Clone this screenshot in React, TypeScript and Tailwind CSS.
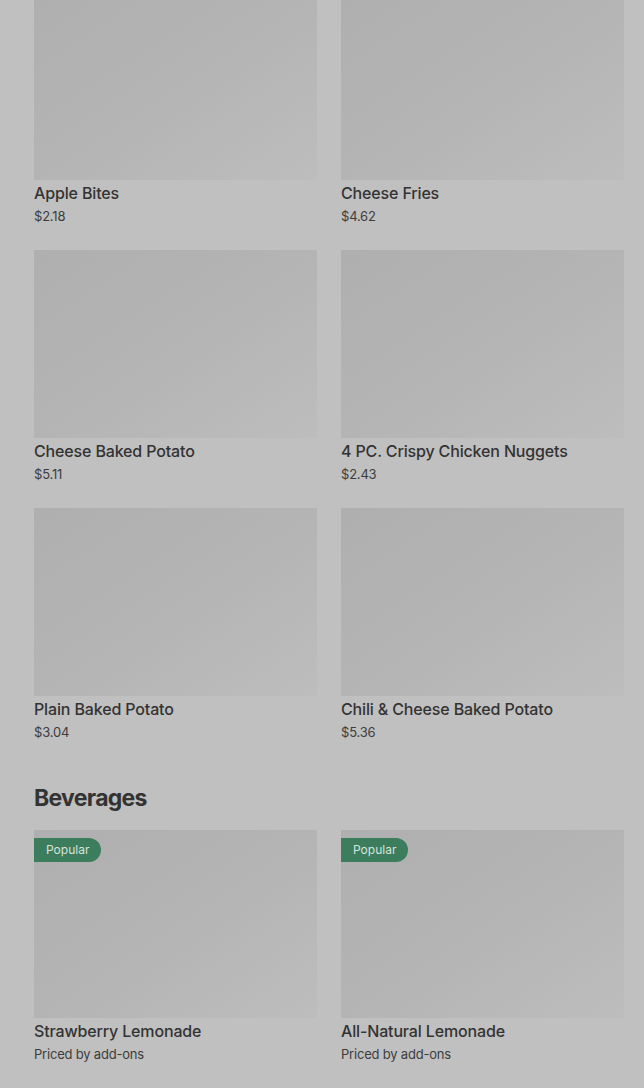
const food = [
  { name: "Apple Bites", price: "$2.18" },
  { name: "Cheese Fries", price: "$4.62" },
  { name: "Cheese Baked Potato", price: "$5.11" },
  { name: "4 PC. Crispy Chicken Nuggets", price: "$2.43" },
  { name: "Plain Baked Potato", price: "$3.04" },
  { name: "Chili & Cheese Baked Potato", price: "$5.36" },
];

const beverages = [
  { name: "Strawberry Lemonade", price: "Priced by add-ons", popular: true },
  { name: "All-Natural Lemonade", price: "Priced by add-ons", popular: true },
];

function ItemCard({ name, price, popular }: { name: string; price: string; popular?: boolean }) {
  return (
    <div className="flex flex-col">
      <div className="relative h-[188px] bg-gradient-to-br from-[#afafaf] via-[#b4b4b4] to-[#bdbdbd]">
        {popular && (
          <span className="absolute left-0 top-2 h-6 pl-3 pr-3 flex items-center rounded-r-full bg-[#3b7d5c] text-[12px] text-[#d6e4dc]">
            Popular
          </span>
        )}
      </div>
      <p className="mt-px text-[16px] leading-6 font-medium tracking-[-0.15px] text-[#333333] truncate">{name}</p>
      <p className="mt-px text-[13px] leading-5 tracking-[-0.2px] text-[#3d3d3d]">{price}</p>
    </div>
  );
}

export default function App() {
  return (
    <div className="min-h-[1088px] overflow-hidden bg-[#c0c0c0]" style={{ fontFamily: "Inter, 'Liberation Sans', sans-serif" }}>
      <div className="mt-[-8px] pl-[34px] pr-[20px]">
        <div className="grid grid-cols-2 gap-x-6 gap-y-6">
          {food.map((item) => (
            <ItemCard key={item.name} {...item} />
          ))}
        </div>

        <h2 className="mt-10 mb-4 text-[23px] leading-8 font-bold tracking-[-0.7px] text-[#333333]">Beverages</h2>

        <div className="grid grid-cols-2 gap-x-6 gap-y-6">
          {beverages.map((item) => (
            <ItemCard key={item.name} {...item} />
          ))}
        </div>
      </div>
    </div>
  );
}
